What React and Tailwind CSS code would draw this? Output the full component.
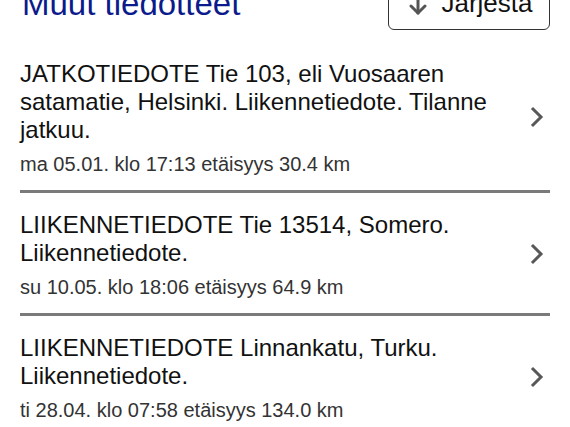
const items = [
  {
    title: "JATKOTIEDOTE Tie 103, eli Vuosaaren satamatie, Helsinki. Liikennetiedote. Tilanne jatkuu.",
    meta: "ma 05.01. klo 17:13 etäisyys 30.4 km",
  },
  {
    title: "LIIKENNETIEDOTE Tie 13514, Somero. Liikennetiedote.",
    meta: "su 10.05. klo 18:06 etäisyys 64.9 km",
  },
  {
    title: "LIIKENNETIEDOTE Linnankatu, Turku. Liikennetiedote.",
    meta: "ti 28.04. klo 07:58 etäisyys 134.0 km",
  },
];

const SortIcon = () => (
  <svg width="18" height="26" viewBox="0 0 18 26" fill="none" stroke="#555" strokeWidth="3" strokeLinecap="round" strokeLinejoin="round">
    <path d="M9 2v21" />
    <path d="M2 16l7 7 7-7" />
  </svg>
);

const Chevron = () => (
  <svg width="14" height="22" viewBox="0 0 14 22" fill="none" stroke="#585858" strokeWidth="3" strokeLinecap="square" strokeLinejoin="miter">
    <path d="M3 3l8 8-8 8" />
  </svg>
);

export default function App() {
  return (
    <div className="bg-white min-h-screen overflow-hidden font-['Liberation_Sans',Arial,sans-serif]">
      <div className="px-5">
        <div className="flex justify-between items-end mt-[-22px]">
          <h1 className="text-[33px] leading-[36px] text-[#0c1b8c] pl-[2px] mb-[8px]">Muut tiedotteet</h1>
          <button className="h-[52px] w-[162px] border-[1.5px] border-[#333] rounded-[6px] flex items-center justify-center gap-[14px] pb-[2px] pl-[4px] text-[26px] leading-[30px] text-[#111]">
            <SortIcon />
            <span>Järjestä</span>
          </button>
        </div>
        <div className="mt-[12px]">
          {items.map((it, i) => (
            <div key={i}>
              {i > 0 && <div className="h-[3px] bg-[#7a7a7a]" />}
              <div className="flex items-center pt-[18px] pb-[14px]">
                <div className="flex-1 pr-4">
                  <div className="text-[24px] leading-[28px] text-[#111]">{it.title}</div>
                  <div className="text-[20px] leading-[24px] text-[#333] mt-[8px]">{it.meta}</div>
                </div>
                <div className="mr-[6px] mt-[-2px]">
                  <Chevron />
                </div>
              </div>
            </div>
          ))}
        </div>
      </div>
    </div>
  );
}
